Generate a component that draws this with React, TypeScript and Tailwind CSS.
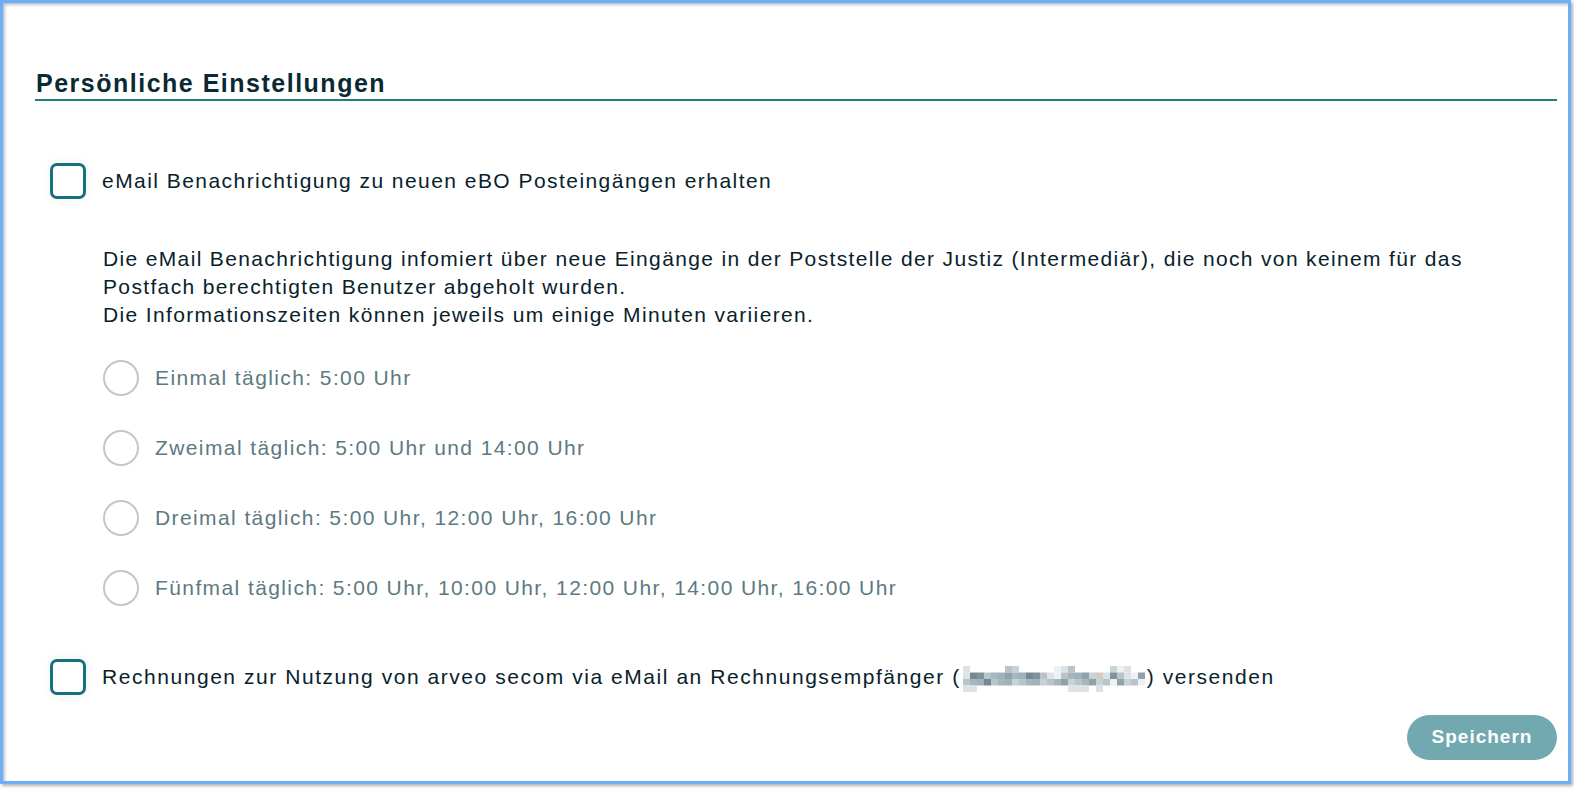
import React from 'react';

const FONT = { fontFamily: '"Liberation Sans", Arial, sans-serif' };

// Verpixelte E-Mail-Adresse (Platzhalter für den unkenntlich gemachten Text)
const PIXEL_COLORS = ['#8fa3a8', '#b7c4c9', '#dde3e5', '#73898f', '#c8d3d7', '#a6b6bb', '#eef1f2', '#7f949b', '#d3cbc0', '#9db2bd'];

function BlurredEmail() {
  const cols = 26;
  const rows = 4;
  const cells: { x: number; y: number; c: string }[] = [];
  for (let r = 0; r < rows; r++) {
    for (let i = 0; i < cols; i++) {
      const n = (i * 37 + r * 91 + ((i * r) % 7) * 13) % 23;
      if (r === 0 && n % 3 !== 0) continue;
      if (r === 3 && n % 4 !== 0) continue;
      let idx = n % PIXEL_COLORS.length;
      if (r === 0 || r === 3) idx = [2, 6, 4, 1][n % 4];
      cells.push({ x: i * 7, y: r * 6.5, c: PIXEL_COLORS[idx] });
    }
  }
  return (
    <svg width="182" height="26" viewBox="0 0 182 26" className="inline-block align-middle mx-[2px]">
      {cells.map((p, k) => (
        <rect key={k} x={p.x} y={p.y} width="7" height="6.5" fill={p.c} />
      ))}
    </svg>
  );
}

function Checkbox() {
  return (
    <span className="w-9 h-9 shrink-0 rounded-[7px] border-[3px] border-[#17707f] bg-white shadow-[0_0_10px_rgba(0,0,0,0.07)]" />
  );
}

function Radio() {
  return <span className="w-9 h-9 shrink-0 rounded-full border-2 border-[#c3c6cc] bg-white" />;
}

export default function App() {
  const options = [
    'Einmal täglich: 5:00 Uhr',
    'Zweimal täglich: 5:00 Uhr und 14:00 Uhr',
    'Dreimal täglich: 5:00 Uhr, 12:00 Uhr, 16:00 Uhr',
    'Fünfmal täglich: 5:00 Uhr, 10:00 Uhr, 12:00 Uhr, 14:00 Uhr, 16:00 Uhr',
  ];

  return (
    <div className="w-[1574px] h-[789px] bg-white overflow-hidden" style={FONT}>
      <div className="w-[1571px] h-[784px] border-[3px] border-[#6aaff8] bg-white shadow-[inset_2px_2px_3px_rgba(0,0,0,0.25),2px_2px_3px_rgba(0,0,0,0.3)] pl-[32px] pr-[11px] pt-[66px] text-[#08222b]">
        <h1 className="text-[25px] leading-[28px] tracking-[1.5px] font-bold text-[#0a2a33] pb-[2px] border-b-2 border-[#1f7f86] pl-[1px]">
          Persönliche Einstellungen
        </h1>

        <div className="mt-[62px] flex items-center gap-4 pl-[15px]">
          <Checkbox />
          <span className="text-[21px] tracking-[1.45px]">eMail Benachrichtigung zu neuen eBO Posteingängen erhalten</span>
        </div>

        <div className="pl-[68px]">
          <p className="mt-[46px] text-[21px] leading-[28px] tracking-[1.35px]">
            Die eMail Benachrichtigung infomiert über neue Eingänge in der Poststelle der Justiz (Intermediär), die noch von keinem für das
            <br />
            Postfach berechtigten Benutzer abgeholt wurden.
            <br />
            Die Informationszeiten können jeweils um einige Minuten variieren.
          </p>

          <div className="mt-[31px] flex flex-col gap-[34px]">
            {options.map((o) => (
              <div key={o} className="flex items-center gap-4">
                <Radio />
                <span className="text-[21px] tracking-[1.4px] text-[#5c7a81]">{o}</span>
              </div>
            ))}
          </div>
        </div>

        <div className="mt-[53px] flex items-center gap-4 pl-[15px]">
          <Checkbox />
          <span className="text-[21px] tracking-[1.55px] whitespace-nowrap">
            Rechnungen zur Nutzung von arveo secom via eMail an Rechnungsempfänger (
            <BlurredEmail />) versenden
          </span>
        </div>

        <div className="mt-[20px] flex justify-end">
          <button className="w-[150px] h-[45px] rounded-full bg-[#72a9b0] text-white font-bold text-[19px] tracking-[1px]">
            Speichern
          </button>
        </div>
      </div>
    </div>
  );
}
